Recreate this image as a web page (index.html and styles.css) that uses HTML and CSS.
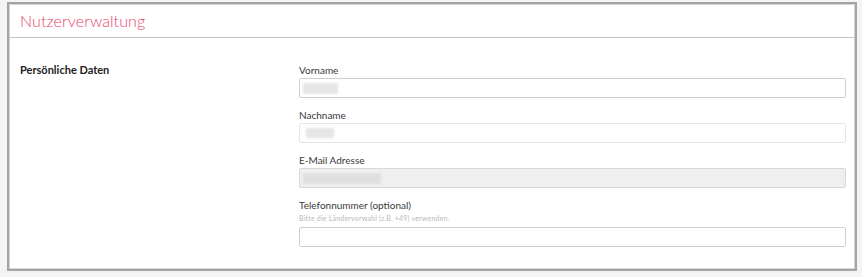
FILE: index.html
```html
<!DOCTYPE html>
<html lang="de">
<head>
  <meta charset="UTF-8" />
  <meta name="viewport" content="width=device-width, initial-scale=1.0"/>
  <title>Nutzerverwaltung</title>
  <link rel="stylesheet" href="styles.css">
</head>
<body>
  <div class="panel">
    <div class="panel-header">
      <h1>Nutzerverwaltung</h1>
    </div>

    <div class="panel-body">
      <h2 class="section-title">Persönliche Daten</h2>

      <div class="fields">
        <div class="field">
          <label>Vorname</label>
          <div class="input"><span class="redacted redacted-first"></span></div>
        </div>

        <div class="field">
          <label>Nachname</label>
          <div class="input input-soft"><span class="redacted redacted-last"></span></div>
        </div>

        <div class="field">
          <label>E-Mail Adresse</label>
          <div class="input input-disabled"><span class="redacted redacted-mail"></span></div>
        </div>

        <div class="field">
          <label>Telefonnummer (optional)</label>
          <p class="hint">Bitte die Ländervorwahl (z.B. +49) verwenden.</p>
          <div class="input"></div>
        </div>
      </div>
    </div>
  </div>
</body>
</html>
```

FILE: styles.css
```css
body {
  margin: 0;
  font-family: 'Lato', 'Open Sans', sans-serif;
  background: #f4f4f4;
  color: #333;
}

.panel {
  margin: 2px 5px 6px 7px;
  background: #fff;
  border: 2px solid #a4a4a4;
  box-shadow: inset 0 0 0 1px #d6d6d6;
}

.panel-header {
  height: 33px;
  padding: 0 11px;
  border-bottom: 1px solid #c4c4c4;
  display: flex;
  align-items: center;
}

.panel-header h1 {
  margin: 0;
  font-size: 16px;
  font-weight: 300;
  color: #e8436a;
  letter-spacing: 0.1px;
}

.panel-body {
  display: grid;
  grid-template-columns: 279px 1fr;
  padding: 25px 9px 22px 11px;
}

.section-title {
  margin: 0;
  font-size: 11px;
  font-weight: 700;
  line-height: 14px;
  color: #222;
}

.fields {
  display: flex;
  flex-direction: column;
  gap: 10px;
}

.field label {
  display: block;
  font-size: 10px;
  line-height: 14px;
  margin-bottom: 1px;
  color: #3a3a3a;
}

.hint {
  margin: 0 0 4px;
  font-size: 7px;
  line-height: 10px;
  letter-spacing: 0.2px;
  color: #b8b8b8;
}

.input {
  height: 18px;
  border: 1px solid #cfcfcf;
  border-radius: 2px;
  background: #fff;
  display: flex;
  align-items: center;
  padding: 0 3px;
}

.input-soft {
  border-color: #e6e6e6;
}

.input-disabled {
  background: #efefef;
  border-color: #d8d8d8;
}

.redacted {
  display: block;
  height: 11px;
  background: #e6e6e6;
  filter: blur(1px);
}

.redacted-first {
  width: 35px;
}

.redacted-last {
  width: 28px;
  margin-left: 3px;
  height: 10px;
}

.redacted-mail {
  width: 78px;
  background: #e0e0e0;
}
```
